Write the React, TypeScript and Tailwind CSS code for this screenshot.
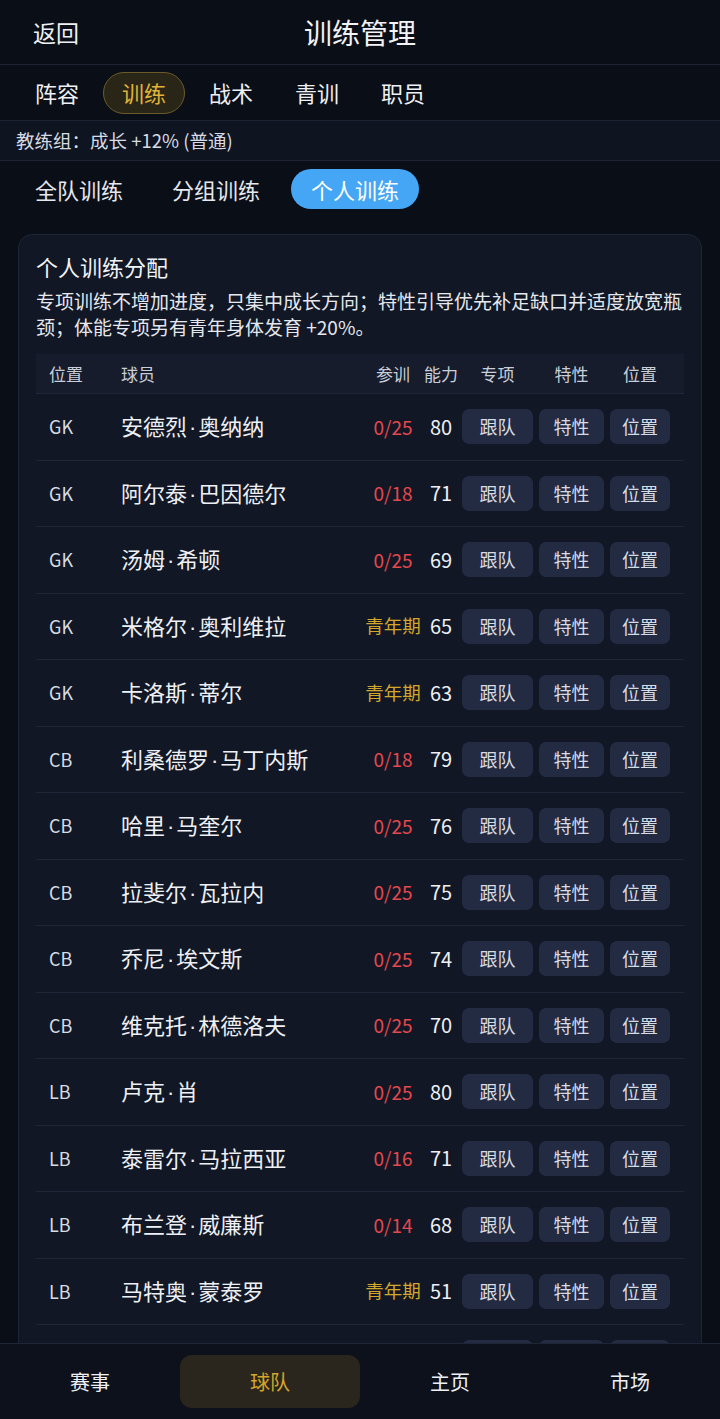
import React from "react";

const players = [
  { pos: "GK", name: ["安德烈", "奥纳纳"], train: "0/25", ability: 80 },
  { pos: "GK", name: ["阿尔泰", "巴因德尔"], train: "0/18", ability: 71 },
  { pos: "GK", name: ["汤姆", "希顿"], train: "0/25", ability: 69 },
  { pos: "GK", name: ["米格尔", "奥利维拉"], train: "青年期", ability: 65 },
  { pos: "GK", name: ["卡洛斯", "蒂尔"], train: "青年期", ability: 63 },
  { pos: "CB", name: ["利桑德罗", "马丁内斯"], train: "0/18", ability: 79 },
  { pos: "CB", name: ["哈里", "马奎尔"], train: "0/25", ability: 76 },
  { pos: "CB", name: ["拉斐尔", "瓦拉内"], train: "0/25", ability: 75 },
  { pos: "CB", name: ["乔尼", "埃文斯"], train: "0/25", ability: 74 },
  { pos: "CB", name: ["维克托", "林德洛夫"], train: "0/25", ability: 70 },
  { pos: "LB", name: ["卢克", "肖"], train: "0/25", ability: 80 },
  { pos: "LB", name: ["泰雷尔", "马拉西亚"], train: "0/16", ability: 71 },
  { pos: "LB", name: ["布兰登", "威廉斯"], train: "0/14", ability: 68 },
  { pos: "LB", name: ["马特奥", "蒙泰罗"], train: "青年期", ability: 51 },
  { pos: "RB", name: ["迪奥戈", "达洛特"], train: "0/25", ability: 77 },
];

const clubTabs = ["阵容", "训练", "战术", "青训", "职员"];
const navItems = ["赛事", "球队", "主页", "市场"];

const PlayerRow = ({ p }: { p: (typeof players)[number] }) => {
  const youth = p.train === "青年期";
  return (
    <div className="flex items-center h-[66.5px] border-b border-[#1f2638] shrink-0">
      <span className="w-[85px] pl-[13px] text-[18px] text-[#d7dbe3]">{p.pos}</span>
      <span className="flex-1 text-[22px] text-[#eef0f4] whitespace-nowrap">
        {p.name[0]}
        <span className="px-[2px]" style={{ fontFamily: '"Liberation Sans", sans-serif' }}>
          ·
        </span>
        {p.name[1]}
      </span>
      <span
        className={
          youth
            ? "w-[60px] text-center text-[18.5px] text-[#d4a72c]"
            : "w-[60px] text-center text-[19px] text-[#e5484d]"
        }
      >
        {p.train}
      </span>
      <span className="w-[36px] text-center text-[20px] text-[#eef0f4]">{p.ability}</span>
      <div className="flex items-center gap-[6px] ml-[3px] mr-[14px]">
        <button className="w-[71px] h-[35px] rounded-[7px] bg-[#232b42] text-[18px] text-[#d7dbe3]">
          跟队
        </button>
        <button className="w-[65px] h-[35px] rounded-[7px] bg-[#232b42] text-[18px] text-[#d7dbe3]">
          特性
        </button>
        <button className="w-[60px] h-[35px] rounded-[7px] bg-[#232b42] text-[18px] text-[#d7dbe3]">
          位置
        </button>
      </div>
    </div>
  );
};

export default function App() {
  return (
    <div
      className="flex flex-col h-[1419px] w-[720px] overflow-hidden bg-[#0a0e17] text-white"
      style={{ fontFamily: '"Noto Sans CJK SC", "Noto Sans", sans-serif' }}
    >
      {/* Header */}
      <header className="relative flex items-center h-[65px] shrink-0 border-b border-[#1c2232] px-[33px]">
        <span className="text-[23px] text-[#eef0f4]">返回</span>
        <h1 className="absolute left-1/2 -translate-x-1/2 text-[28px] text-[#f2f3f6]">训练管理</h1>
      </header>

      {/* Club tabs */}
      <nav className="flex items-center h-[56px] shrink-0 border-b border-[#1c2232] pl-[17px] gap-[6px]">
        {clubTabs.map((t) => (
          <span
            key={t}
            className={
              t === "训练"
                ? "px-[18px] h-[42px] flex items-center rounded-full border border-[#6b5a2a] bg-[#2a2617] text-[22px] text-[#e0b43a]"
                : "px-[18px] h-[42px] flex items-center text-[22px] text-[#eef0f4]"
            }
          >
            {t}
          </span>
        ))}
      </nav>

      {/* Coach strip */}
      <div className="flex items-center h-[40px] shrink-0 bg-[#0f1421] border-b border-[#1c2232] px-[16px] text-[18.5px] text-[#d7dbe3]">
        教练组：成长 +12% (普通)
      </div>

      {/* Training mode tabs */}
      <div className="flex items-center h-[56px] shrink-0 pl-[17px] gap-[13px]">
        <span className="px-[18px] h-[40px] flex items-center text-[22px] text-[#e6e8ee]">全队训练</span>
        <span className="px-[18px] h-[40px] flex items-center text-[22px] text-[#e6e8ee]">分组训练</span>
        <span className="px-[20px] h-[40px] flex items-center rounded-full bg-[#45a6f5] text-[22px] text-white">
          个人训练
        </span>
      </div>

      {/* Content */}
      <main className="flex-1 min-h-0 overflow-hidden px-[18px] pt-[17px]">
        <section className="rounded-[14px] border border-[#1e2536] bg-[#111725] px-[17px] pt-[17px] flex flex-col">
          <h2 className="text-[22px] leading-[28px] text-[#f2f3f6]">个人训练分配</h2>
          <p className="mt-[8px] text-[19px] leading-[26px] text-[#e6e8ee]">
            专项训练不增加进度，只集中成长方向；特性引导优先补足缺口并适度放宽瓶颈；体能专项另有青年身体发育 +20%。
          </p>
          <div className="mt-[14px] flex items-center h-[40px] shrink-0 bg-[#161c2b] text-[17px] text-[#c9ced8] border-b border-[#1f2638]">
            <span className="w-[85px] pl-[13px]">位置</span>
            <span className="flex-1">球员</span>
            <span className="w-[60px] text-center">参训</span>
            <span className="w-[36px] text-center">能力</span>
            <span className="w-[71px] ml-[3px] text-center">专项</span>
            <span className="w-[65px] ml-[6px] text-center">特性</span>
            <span className="w-[60px] ml-[6px] mr-[14px] text-center">位置</span>
          </div>
          {players.map((p) => (
            <PlayerRow key={p.name.join("·")} p={p} />
          ))}
        </section>
      </main>

      {/* Bottom nav */}
      <footer className="flex items-center h-[76px] shrink-0 border-t border-[#1e2536] bg-[#0d111c]">
        {navItems.map((n) => (
          <div key={n} className="flex-1 flex justify-center">
            {n === "球队" ? (
              <span className="w-[180px] h-[53px] flex items-center justify-center rounded-[12px] bg-[#2a261d] text-[20px] text-[#d4a72c]">
                {n}
              </span>
            ) : (
              <span className="text-[20px] text-[#eef0f4]">{n}</span>
            )}
          </div>
        ))}
      </footer>
    </div>
  );
}
